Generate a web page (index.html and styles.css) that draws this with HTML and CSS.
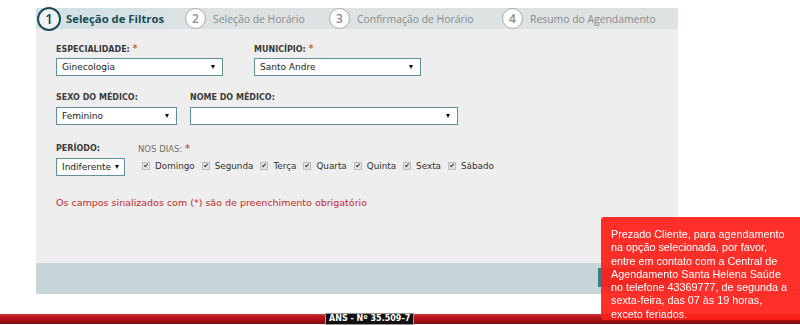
FILE: index.html
```html
<!doctype html>
<html lang="pt-BR">
<head>
  <meta charset="utf-8">
  <title>Agendamento – Seleção de Filtros</title>
  <meta name="viewport" content="width=device-width,initial-scale=1">
  <link rel="stylesheet" href="styles.css">
</head>
<body>
  <div class="page">
    <div class="panel">
      <ol class="steps">
        <li class="step step-1 active"><span class="num">1</span>Seleção de Filtros</li>
        <li class="step step-2"><span class="num">2</span>Seleção de Horário</li>
        <li class="step step-3"><span class="num">3</span>Confirmação de Horário</li>
        <li class="step step-4"><span class="num">4</span>Resumo do Agendamento</li>
      </ol>

      <form class="filters">
        <div class="row row-1">
          <div class="field f-esp">
            <label>ESPECIALIDADE: <em>*</em></label>
            <div class="select">Ginecologia</div>
          </div>
          <div class="field f-mun">
            <label>MUNICÍPIO: <em>*</em></label>
            <div class="select">Santo Andre</div>
          </div>
        </div>

        <div class="row row-2">
          <div class="field f-sexo">
            <label>SEXO DO MÉDICO:</label>
            <div class="select">Feminino</div>
          </div>
          <div class="field f-nome">
            <label>NOME DO MÉDICO:</label>
            <div class="select"></div>
          </div>
        </div>

        <div class="row row-3">
          <div class="field f-periodo">
            <label>PERÍODO:</label>
            <div class="select">Indiferente</div>
          </div>
          <div class="field f-dias">
            <label class="light">NOS DIAS: <em>*</em></label>
            <div class="days">
              <span class="day"><i class="cb"></i>Domingo</span>
              <span class="day"><i class="cb"></i>Segunda</span>
              <span class="day"><i class="cb"></i>Terça</span>
              <span class="day"><i class="cb"></i>Quarta</span>
              <span class="day"><i class="cb"></i>Quinta</span>
              <span class="day"><i class="cb"></i>Sexta</span>
              <span class="day"><i class="cb"></i>Sábado</span>
            </div>
          </div>
        </div>

        <p class="required-note">Os campos sinalizados com (*) são de preenchimento obrigatório</p>
      </form>

      <div class="panel-foot">
        <button class="btn-next" type="button">Próximo</button>
      </div>
    </div>

    <div class="ans-bar"><span class="ans-tag">ANS - Nº 35.509-7</span></div>
  </div>

  <div class="toast">
    Prezado Cliente, para agendamento<br>
    na opção selecionada, por favor,<br>
    entre em contato com a Central de<br>
    Agendamento Santa Helena Saúde<br>
    no telefone 43369777, de segunda a<br>
    sexta-feira, das 07 às 19 horas,<br>
    exceto feriados.
  </div>
</body>
</html>
```

FILE: styles.css
```css
:root {
  --teal-dark:  #1d4c57;
  --teal:       #3a7b86;
  --field-line: #62909a;
  --panel-bg:   #eeeeee;
  --bar-bg:     #dde2e3;
  --foot-bg:    #c8d5d8;
  --text:       #333;
  --muted:      #8a8a8a;
  --req:        #c8282a;
}
*, *::before, *::after { box-sizing: border-box; }
body {
  margin: 0;
  background: #fff;
  color: var(--text);
  font-family: "DejaVu Sans", Verdana, sans-serif;
  font-size: 9px;
}

/* ── page / panel ─────────────────────────────────────── */
.page { padding: 8px 0 0 36px; }
.panel { width: 642px; background: var(--panel-bg); }

/* ── steps bar ────────────────────────────────────────── */
.steps {
  list-style: none;
  margin: 0;
  padding: 0;
  height: 21px;
  display: flex;
  align-items: center;
  background: var(--bar-bg);
  font-family: "Open Sans", sans-serif;
  font-size: 10.4px;
  color: var(--muted);
}
.step {
  display: flex;
  align-items: center;
  gap: 7px;
  height: 100%;
}
.step-1 { width: 149px; padding-left: 1px; }
.step-2 { width: 144px; }
.step-3 { width: 173px; }
.step.active {
  background: linear-gradient(to right, #d2e2e5 0%, #d6e2e4 70%, var(--bar-bg) 100%);
  color: var(--teal-dark);
  font-weight: 700;
  font-size: 11.3px;
  gap: 5px;
}
.num {
  width: 21px;
  height: 21px;
  border: 1.5px solid #a9a9a9;
  border-radius: 50%;
  background: #fff;
  display: flex;
  align-items: center;
  justify-content: center;
  font-size: 12px;
  font-weight: 600;
  color: #8d8d8d;
}
.active .num {
  width: 24px;
  height: 24px;
  border: 2px solid var(--teal-dark);
  color: var(--teal-dark);
  background: #eef3f4;
  font-size: 14px;
}

/* ── filters form ─────────────────────────────────────── */
.filters {
  height: 234px;
  padding: 15px 20px 0;
}
.row { display: flex; align-items: flex-start; }
.row-1 { gap: 31px; }
.row-2 { margin-top: 17px; gap: 13px; }
.row-3 { margin-top: 19px; gap: 13px; }
.field label {
  display: block;
  height: 10px;
  line-height: 10px;
  margin-bottom: 4px;
  font-size: 8px;
  font-weight: 700;
  color: #3b3b3b;
}
.field label.light { font-weight: 400; color: #6d6d6d; font-size: 8.5px; }
.field label em { font-style: normal; color: var(--req); font-weight: 400; font-size: 10px; }

.select {
  position: relative;
  height: 18px;
  line-height: 16px;
  padding: 0 18px 0 5px;
  background: #fff;
  border: 1px solid var(--field-line);
  color: #222;
  font-size: 9px;
  white-space: nowrap;
}
.select::after {
  content: "";
  position: absolute;
  right: 7px;
  top: 6px;
  border-left: 2.5px solid transparent;
  border-right: 2.5px solid transparent;
  border-top: 4px solid #111;
}
.f-esp .select, .f-mun .select { width: 167px; }
.f-sexo .select { width: 121px; }
.f-nome .select { width: 268px; }
.f-periodo .select { width: 69px; padding-right: 14px; }
.f-periodo .select::after { right: 5px; }

.days {
  display: flex;
  align-items: center;
  height: 16px;
  padding-left: 4px;
  gap: 7px;
  font-size: 8.8px;
  color: #333;
}
.day { display: flex; align-items: center; gap: 5px; }
.cb {
  position: relative;
  width: 8px;
  height: 8px;
  background: #e2e2e2;
  border: 1px solid #bdbdbd;
}
.cb::after {
  content: "";
  position: absolute;
  left: 2px;
  top: 0;
  width: 2px;
  height: 4px;
  border-right: 1.5px solid #333;
  border-bottom: 1.5px solid #333;
  transform: rotate(40deg);
}

.required-note {
  margin: 21px 0 0;
  line-height: 12px;
  font-size: 9.5px;
  color: var(--req);
}

/* ── panel footer ─────────────────────────────────────── */
.panel-foot {
  height: 31px;
  background: var(--foot-bg);
  display: flex;
  justify-content: flex-end;
  padding: 5px 10px 0 0;
}
.btn-next {
  width: 70px;
  height: 19px;
  border: none;
  background: var(--teal);
  color: #fff;
  font-family: "DejaVu Sans", sans-serif;
  font-size: 9px;
  font-weight: 700;
}

/* ── ANS bar ──────────────────────────────────────────── */
.ans-bar {
  margin: 19px 0 0 -36px;
  height: 12px;
  padding-left: 325px;
  background: linear-gradient(to bottom, transparent 0 1px, #cf3a41 1px, #b8141d 4px, #a50f17 8px, #7d0a10 11px, transparent 11px);
}
.ans-tag {
  display: inline-block;
  height: 12px;
  line-height: 10px;
  padding: 0 3px;
  background: #111;
  border: 1px solid #9a9a9a;
  color: #fff;
  font-size: 8px;
  font-weight: 700;
}

/* ── toast ────────────────────────────────────────────── */
.toast {
  position: fixed;
  left: 601px;
  top: 217px;
  width: 200px;
  height: 103px;
  padding: 11px 10px 0 10px;
  background: rgba(255, 32, 26, .93);
  border-radius: 3px 0 0 3px;
  color: #fff;
  font-family: "Liberation Sans", Arial, sans-serif;
  font-size: 10.8px;
  line-height: 13.3px;
  white-space: nowrap;
}
```
